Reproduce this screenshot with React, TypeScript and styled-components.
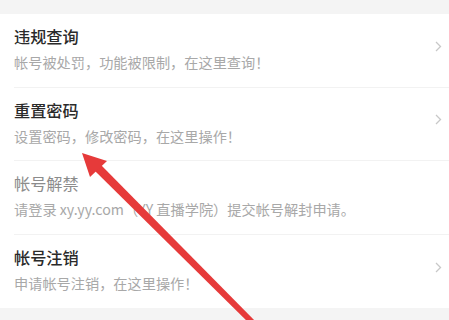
import React from "react";
import styled, { createGlobalStyle } from "styled-components";

const Global = createGlobalStyle`
  html, body { margin: 0; padding: 0; background: #f4f4f4; }
  body { font-family: "Noto Sans CJK SC", "Noto Sans", sans-serif; }
`;

const Page = styled.div`
  position: relative;
  width: 449px;
  height: 320px;
  overflow: hidden;
  background: #f4f4f4;
  padding-top: 14px;
  box-sizing: border-box;
`;

const List = styled.div`
  display: flex;
  flex-direction: column;
  background: #fff;
`;

const Row = styled.div<{ $last?: boolean }>`
  display: flex;
  align-items: center;
  height: 73.5px;
  margin-left: 14px;
  padding-right: 7px;
  box-sizing: border-box;
  border-bottom: ${(p) => (p.$last ? "none" : "1px solid #f2f2f2")};
`;

const Texts = styled.div`
  flex: 1;
  display: flex;
  flex-direction: column;
  gap: 5px;
  margin-top: -3px;
`;

const Title = styled.div<{ $muted?: boolean }>`
  font-size: 16.2px;
  line-height: 22px;
  font-weight: ${(p) => (p.$muted ? 400 : 500)};
  color: ${(p) => (p.$muted ? "#8c8c8c" : "#2a2a2a")};
`;

const Sub = styled.div`
  font-size: 14.2px;
  line-height: 20px;
  color: #a8a8a8;
  white-space: nowrap;
`;

const Chevron = styled.svg`
  width: 7px;
  height: 11px;
  flex: none;
  margin-top: -8px;
`;

const Overlay = styled.svg`
  position: absolute;
  left: 0;
  top: 0;
  pointer-events: none;
`;

const items = [
  { title: "违规查询", sub: "帐号被处罚，功能被限制，在这里查询！", arrow: true },
  { title: "重置密码", sub: "设置密码，修改密码，在这里操作！", arrow: true },
  { title: "帐号解禁", sub: "请登录 xy.yy.com（YY 直播学院）提交帐号解封申请。", arrow: false, muted: true },
  { title: "帐号注销", sub: "申请帐号注销，在这里操作！", arrow: true },
];

export default function App() {
  return (
    <>
      <Global />
      <Page>
        <List>
          {items.map((it, i) => (
            <Row key={i} $last={i === items.length - 1}>
              <Texts>
                <Title $muted={it.muted}>{it.title}</Title>
                <Sub>{it.sub}</Sub>
              </Texts>
              {it.arrow && (
                <Chevron viewBox="0 0 7 11">
                  <path d="M1 1 L5.5 5.5 L1 10" fill="none" stroke="#c8c8c8" strokeWidth="1.3" />
                </Chevron>
              )}
            </Row>
          ))}
        </List>
        <Overlay width="449" height="320" viewBox="0 0 449 320">
          <polygon points="95,171 101,165 259,325 255,329" fill="#e63a3a" />
          <polygon points="82,153 107,161 90,177" fill="#e63a3a" />
        </Overlay>
      </Page>
    </>
  );
}
